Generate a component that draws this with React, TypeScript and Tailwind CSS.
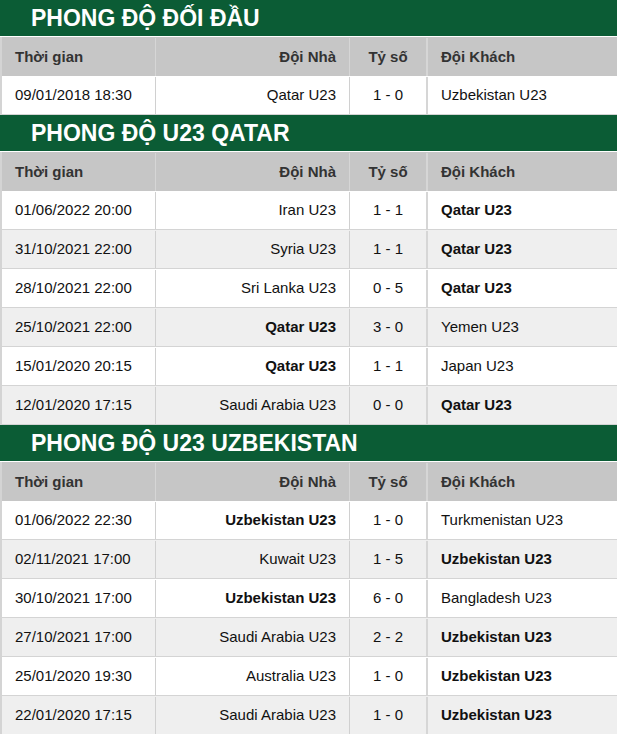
import React from 'react';

type Match = {
  time: string;
  home: string;
  score: string;
  away: string;
  bold?: 'home' | 'away';
};

const sections: { title: string; rows: Match[] }[] = [
  {
    title: 'PHONG ĐỘ ĐỐI ĐẦU',
    rows: [{ time: '09/01/2018 18:30', home: 'Qatar U23', score: '1 - 0', away: 'Uzbekistan U23' }],
  },
  {
    title: 'PHONG ĐỘ U23 QATAR',
    rows: [
      { time: '01/06/2022 20:00', home: 'Iran U23', score: '1 - 1', away: 'Qatar U23', bold: 'away' },
      { time: '31/10/2021 22:00', home: 'Syria U23', score: '1 - 1', away: 'Qatar U23', bold: 'away' },
      { time: '28/10/2021 22:00', home: 'Sri Lanka U23', score: '0 - 5', away: 'Qatar U23', bold: 'away' },
      { time: '25/10/2021 22:00', home: 'Qatar U23', score: '3 - 0', away: 'Yemen U23', bold: 'home' },
      { time: '15/01/2020 20:15', home: 'Qatar U23', score: '1 - 1', away: 'Japan U23', bold: 'home' },
      { time: '12/01/2020 17:15', home: 'Saudi Arabia U23', score: '0 - 0', away: 'Qatar U23', bold: 'away' },
    ],
  },
  {
    title: 'PHONG ĐỘ U23 UZBEKISTAN',
    rows: [
      { time: '01/06/2022 22:30', home: 'Uzbekistan U23', score: '1 - 0', away: 'Turkmenistan U23', bold: 'home' },
      { time: '02/11/2021 17:00', home: 'Kuwait U23', score: '1 - 5', away: 'Uzbekistan U23', bold: 'away' },
      { time: '30/10/2021 17:00', home: 'Uzbekistan U23', score: '6 - 0', away: 'Bangladesh U23', bold: 'home' },
      { time: '27/10/2021 17:00', home: 'Saudi Arabia U23', score: '2 - 2', away: 'Uzbekistan U23', bold: 'away' },
      { time: '25/01/2020 19:30', home: 'Australia U23', score: '1 - 0', away: 'Uzbekistan U23', bold: 'away' },
      { time: '22/01/2020 17:15', home: 'Saudi Arabia U23', score: '1 - 0', away: 'Uzbekistan U23', bold: 'away' },
    ],
  },
];

// left border is 2px, so first track is 153px to put the column lines at 155 / 349 / 426
const grid = 'grid grid-cols-[153px_194px_77px_1fr]';

export default function App() {
  return (
    <div className="w-[617px] bg-white font-['Liberation_Sans',Arial,sans-serif] text-[15px] text-[#111]">
      {sections.map((section) => (
        <div key={section.title}>
          {/* Section title */}
          <div className="flex h-[37px] items-center border-b border-white bg-[#0b5c35] pl-[31px] pt-px text-[23px] font-bold leading-none text-white">
            {section.title}
          </div>

          {/* Table header */}
          <div className={`${grid} h-[39px] border-l-2 border-[#d4d4d4] bg-[#c6c6c6] pt-px font-bold text-[#333]`}>
            <div className="flex items-center pl-[13px]">Thời gian</div>
            <div className="flex items-center justify-end border-l border-[#d6d6d6] pr-[13px]">Đội Nhà</div>
            <div className="flex items-center justify-center border-l border-[#d6d6d6]">Tỷ số</div>
            <div className="flex items-center border-l-2 border-[#d6d6d6] pl-[13px]">Đội Khách</div>
          </div>

          {section.rows.map((row, i) => (
            <div
              key={row.time}
              className={`${grid} h-[39px] border-b border-l-2 border-[#d4d4d4] pt-px ${i % 2 === 0 ? 'bg-white' : 'bg-[#efefef]'}`}
            >
              <div className="flex items-center pl-[13px]">{row.time}</div>
              <div
                className={`flex items-center justify-end border-l border-[#d0d0d0] pr-[13px] ${row.bold === 'home' ? 'font-bold' : ''}`}
              >
                {row.home}
              </div>
              <div className="flex items-center justify-center border-l border-[#d0d0d0]">{row.score}</div>
              <div
                className={`flex items-center border-l-2 border-[#d6d6d6] pl-[13px] ${row.bold === 'away' ? 'font-bold' : ''}`}
              >
                {row.away}
              </div>
            </div>
          ))}
        </div>
      ))}
    </div>
  );
}
